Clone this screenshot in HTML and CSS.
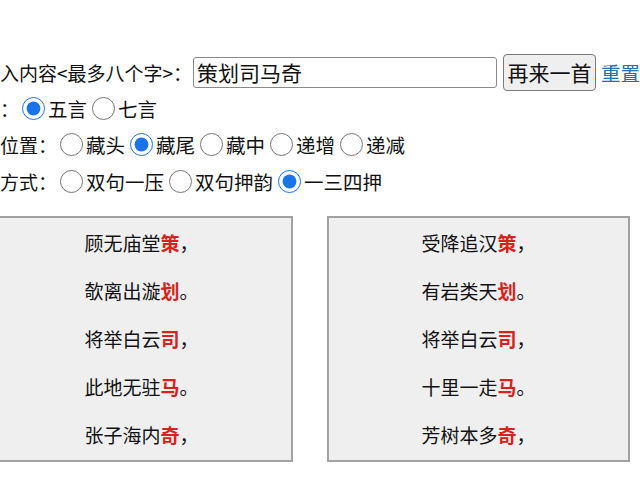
FILE: index.html
```html
<!DOCTYPE html>
<html lang="zh-CN">
<head>
  <meta charset="UTF-8">
  <title>藏头诗生成</title>
  <link rel="stylesheet" href="styles.css">
</head>
<body>
  <div class="page">

    <!-- 输入 -->
    <div class="row first">
      <span class="label">请输入内容&lt;最多八个字&gt;：</span>
      <input type="text" class="word-input" value="策划司马奇">
      <button class="again-btn">再来一首</button>
      <a href="#" class="reset">重置</a>
    </div>

    <div class="row">
      <span class="label">格式：</span>
      <label class="opt"><input type="radio" name="len" checked>五言</label>
      <label class="opt"><input type="radio" name="len">七言</label>
    </div>

    <div class="row">
      <span class="label">藏字位置：</span>
      <label class="opt"><input type="radio" name="pos">藏头</label>
      <label class="opt"><input type="radio" name="pos" checked>藏尾</label>
      <label class="opt"><input type="radio" name="pos">藏中</label>
      <label class="opt"><input type="radio" name="pos">递增</label>
      <label class="opt"><input type="radio" name="pos">递减</label>
    </div>

    <div class="row">
      <span class="label">押韵方式：</span>
      <label class="opt"><input type="radio" name="rhyme">双句一压</label>
      <label class="opt"><input type="radio" name="rhyme">双句押韵</label>
      <label class="opt"><input type="radio" name="rhyme" checked>一三四押</label>
    </div>

    <!-- 结果 -->
    <div class="poems">
      <div class="poem">
        <p>顾无庙堂<b>策</b>，</p>
        <p>欹离出漩<b>划</b>。</p>
        <p>将举白云<b>司</b>，</p>
        <p>此地无驻<b>马</b>。</p>
        <p>张子海内<b>奇</b>，</p>
      </div>
      <div class="poem">
        <p>受降追汉<b>策</b>，</p>
        <p>有岩类天<b>划</b>。</p>
        <p>将举白云<b>司</b>，</p>
        <p>十里一走<b>马</b>。</p>
        <p>芳树本多<b>奇</b>，</p>
      </div>
    </div>

  </div>
</body>
</html>
```

FILE: styles.css
```css
* {
  margin: 0;
  padding: 0;
  box-sizing: border-box;
}

body {
  background: #fff;
  color: #111;
  font-family: "Noto Sans CJK SC", "Noto Sans", sans-serif;
  font-size: 19px;
  overflow: hidden;
}

.page {
  margin-left: -38px;
  padding-top: 53px;
}

.row {
  display: flex;
  align-items: center;
  height: 36.5px;
  white-space: nowrap;
}

.row > * {
  flex-shrink: 0;
}

.row.first {
  height: 38px;
  margin-bottom: -1px;
}

.word-input {
  width: 304px;
  height: 31px;
  margin-left: 1px;
  padding: 0 3px;
  border: 1.5px solid #8a8a8a;
  border-radius: 3px;
  font-family: inherit;
  font-size: 21px;
  color: #111;
}

.again-btn {
  width: 93px;
  height: 37px;
  margin-left: 6px;
  background: #efefef;
  border: 1.5px solid #7a7a7a;
  border-radius: 4px;
  font-family: inherit;
  font-size: 21px;
  color: #111;
}

.reset {
  margin-left: 5px;
  color: #1f6fae;
  font-size: 19.5px;
  text-decoration: none;
}

.opt {
  display: flex;
  align-items: center;
  margin-left: 3px;
  margin-right: 2px;
  font-size: 19.5px;
}

.opt input {
  width: 23px;
  height: 23px;
  margin: 0 3px 0 0;
  accent-color: #1a73e8;
}

.poems {
  display: flex;
  gap: 34px;
  margin-left: 28px;
  margin-top: 16px;
}

.poem {
  width: 303px;
  padding: 1px 0;
  background: #efeff0;
  border: 2px solid #a2a2a2;
  text-align: center;
}

.poem p {
  line-height: 48px;
}

.poem b {
  color: #d8231c;
}
```
